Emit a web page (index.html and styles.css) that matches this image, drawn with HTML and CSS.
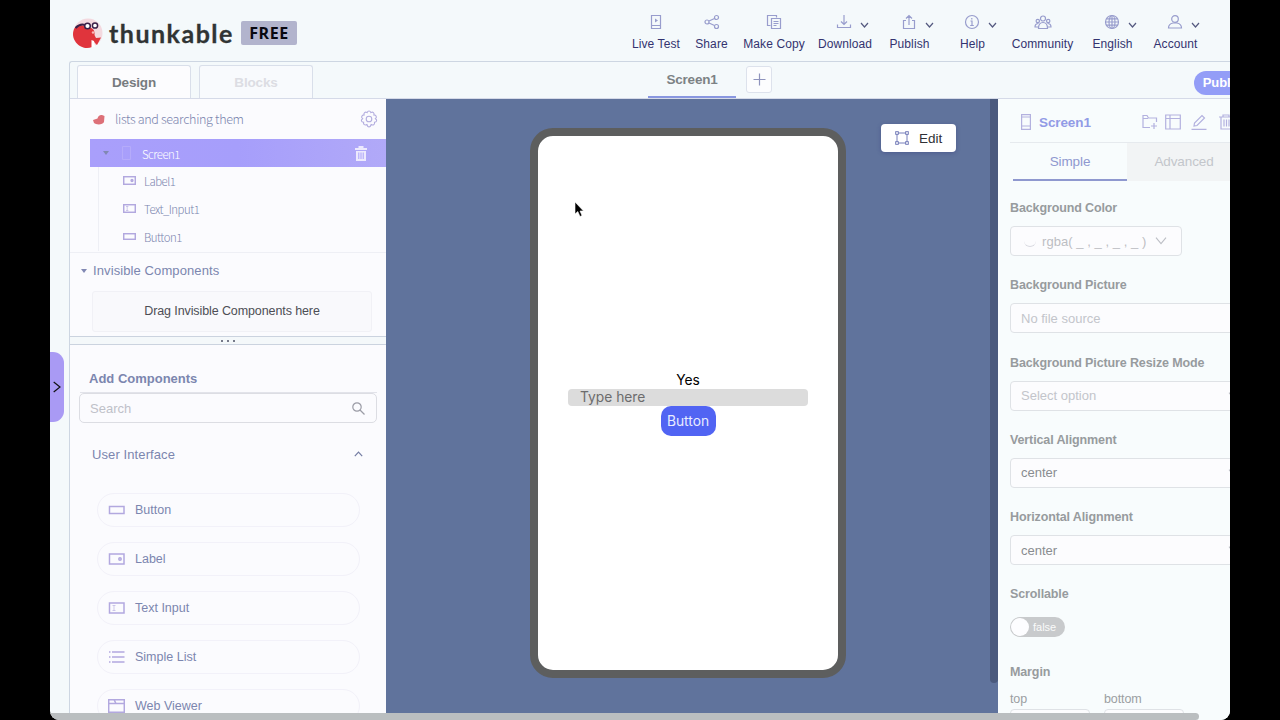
FILE: index.html
```html
<!DOCTYPE html>
<html lang="en">
<head>
  <meta charset="UTF-8" />
  <meta name="viewport" content="width=device-width, initial-scale=1.0"/>
  <title>Thunkable</title>
  <link rel="stylesheet" href="styles.css">
</head>
<body>

  <div class="window">
    <header class="header">
      <div class="brand">
        <svg class="brand-logo" width="30" height="31" viewBox="0 0 30 31">
          <circle cx="15" cy="15" r="14.500" fill="#f3d9df"/>
          <path d="M1 11C4 6 10 7 15 9C20 10 22 12 21.500 17L23 20L28 19.500L24 27L21 24L19 29C12 32 5 28 2 23C-1 18 0 14 1 11Z" fill="#e0343c"/>
          <path d="M18.500 22l2.500 1 1 5.500-3.500 1z" fill="#fff"/>
          <path d="M2.500 10C6 6.500 9 6 12 7" stroke="#3a2048" stroke-width="2" fill="none"/>
          <circle cx="14.500" cy="8" r="2.800" fill="#fff" stroke="#3a2048" stroke-width="1.500"/>
          <circle cx="22" cy="7.500" r="2.600" fill="#fff" stroke="#3a2048" stroke-width="1.500"/>
          <circle cx="20" cy="14.500" r="1.200" fill="#f8b8b8"/>
        </svg>
        <span class="brand-name">thunkable</span>
        <span class="plan">FREE</span>
      </div>
      <nav class="nav">
        <div class="nav-item">
          <div class="nav-icon"><svg width="16" height="16" viewBox="0 0 16 16"><path d="M3.500 1.500h9v13h-9zM3.500 11.500h9"/><path d="M7 4.500v4l3-2z" fill="#989dcd" stroke="none"/></svg></div>
          <span>Live Test</span>
        </div>
        <div class="nav-item">
          <div class="nav-icon"><svg width="16" height="16" viewBox="0 0 16 16"><circle cx="3" cy="8" r="2"/><circle cx="12.500" cy="3.500" r="2"/><circle cx="12.500" cy="12.500" r="2"/><path d="M5 7l5.500-2.500M5 9l5.500 2.500"/></svg></div>
          <span>Share</span>
        </div>
        <div class="nav-item">
          <div class="nav-icon"><svg width="16" height="16" viewBox="0 0 16 16"><path d="M4.500 11.500h-3v-10h9v2M5.500 4.500h9v10h-9zM7.500 7.500h5M7.500 9.500h5M7.500 11.500h3"/></svg></div>
          <span>Make Copy</span>
        </div>
        <div class="nav-item">
          <div class="nav-icon"><svg width="16" height="16" viewBox="0 0 16 16"><path d="M8 1v9.500M5 7.500l3 3 3-3M1.500 10.500v3h13v-3"/></svg><svg class="chev" width="9" height="6" viewBox="0 0 9 6"><path d="M1 1l3.500 4L8 1"/></svg></div>
          <span>Download</span>
        </div>
        <div class="nav-item">
          <div class="nav-icon"><svg width="16" height="16" viewBox="0 0 16 16"><path d="M8 11V2M5 4.500l3-3 3 3M5 6.500H2.500v8h11v-8H11"/></svg><svg class="chev" width="9" height="6" viewBox="0 0 9 6"><path d="M1 1l3.500 4L8 1"/></svg></div>
          <span>Publish</span>
        </div>
        <div class="nav-item">
          <div class="nav-icon"><svg width="16" height="16" viewBox="0 0 16 16"><circle cx="8" cy="8" r="6.500"/><path d="M6.500 7H8v4.500M6.200 11.500h3.600M7.800 4v1.500"/></svg><svg class="chev" width="9" height="6" viewBox="0 0 9 6"><path d="M1 1l3.500 4L8 1"/></svg></div>
          <span>Help</span>
        </div>
        <div class="nav-item">
          <div class="nav-icon"><svg width="18" height="16" viewBox="0 0 18 16"><circle cx="9" cy="4.500" r="2.500"/><circle cx="3.800" cy="7" r="1.700"/><circle cx="14.200" cy="7" r="1.700"/><path d="M4.500 14.500c0-4 1.500-6 4.500-6s4.500 2 4.500 6zM4 13H1c0-2 1-3.500 3.500-3.500M14 13h3c0-2-1-3.500-3.500-3.500"/></svg></div>
          <span>Community</span>
        </div>
        <div class="nav-item">
          <div class="nav-icon"><svg width="16" height="16" viewBox="0 0 16 16"><circle cx="8" cy="8" r="6.500"/><ellipse cx="8" cy="8" rx="3" ry="6.500"/><path d="M8 1.500v13M1.500 8h13M2.500 4.800h11M2.500 11.200h11"/></svg><svg class="chev" width="9" height="6" viewBox="0 0 9 6"><path d="M1 1l3.500 4L8 1"/></svg></div>
          <span>English</span>
        </div>
        <div class="nav-item">
          <div class="nav-icon"><svg width="16" height="16" viewBox="0 0 16 16"><circle cx="8" cy="5" r="3.300"/><path d="M1.500 14c0-3 2-4.500 4.500-5h4c2.500.5 4.500 2 4.500 5z"/></svg><svg class="chev" width="9" height="6" viewBox="0 0 9 6"><path d="M1 1l3.500 4L8 1"/></svg></div>
          <span>Account</span>
        </div>
      </nav>
    </header>

    <div class="editor">
      <div class="tab-bar">
        <div class="mode-tab active">Design</div>
        <div class="mode-tab">Blocks</div>
        <div class="screen-tab">Screen1</div>
        <div class="add-screen"><svg width="13" height="13" viewBox="0 0 13 13"><path d="M6.500.5v12M.5 6.500h12"/></svg></div>
        <div class="publish-btn">Publish</div>
      </div>

      <div class="panes">
        <aside class="left-pane">
          <div class="project">
            <svg width="12" height="11" viewBox="0 0 12 11"><path d="M0 6l4.500-1.500C5 2 7 .5 9 1L11.500 2 11 8c-1 3-8 3-10 1z" fill="#dd7078"/></svg>
            <span>lists and searching them</span>
            <svg class="gear" width="18" height="18" viewBox="0 0 18 18"><path d="M9 1q1.300 0 1.900 1.600 1.500-.9 2.500 0t.5 2.300q1.700 0 2.300 1.300t-.8 2.500q1.600 1 1.200 2.200t-2.100 1.400q.3 1.700-.8 2.400t-2.500-.2Q10.400 17 9 17t-2.100-2.500q-1.500.9-2.600.1T3.600 12.300Q1.800 12 1.400 10.900T2.600 8.700Q1.200 7.400 1.800 6.200T4.100 4.900Q3.600 3.500 4.600 2.600t2.500 0Q7.700 1 9 1z"/><circle cx="9" cy="9" r="2.800"/></svg>
          </div>
          <div class="tree">
            <div class="tree-root">
              <i class="caret"></i>
              <svg class="root-phone" width="9" height="14" viewBox="0 0 9 14"><path d="M.5.500h8v13h-8z"/></svg>
              <span>Screen1</span>
              <svg class="root-trash" width="12" height="15" viewBox="0 0 12 15"><path d="M0 2h3.500V0h5v2H12v2H0zM1 5h10v10H1z" fill="#ece9fd"/><path d="M3.800 6.500v6.500M6 6.500v6.500M8.200 6.500v6.500" stroke="#aaa1fa"/></svg>
            </div>
            <div class="tree-children">
              <div class="tree-item"><svg width="13" height="9" viewBox="0 0 13 9"><rect x=".7" y=".7" width="11.600" height="7.600"/><circle cx="9" cy="4.500" r=".9"/></svg>Label1</div>
              <div class="tree-item"><svg width="13" height="9" viewBox="0 0 13 9"><rect x=".7" y=".7" width="11.600" height="7.600"/><path class="thin" d="M3 2.500h2.400M4.200 2.500v4M3 6.500h2.400"/></svg>Text_Input1</div>
              <div class="tree-item"><svg width="13" height="7" viewBox="0 0 13 7"><rect x=".7" y=".7" width="11.600" height="5.600"/></svg>Button1</div>
            </div>
          </div>
          <div class="invisible">
            <div class="invisible-title"><i class="caret"></i>Invisible Components</div>
            <div class="drop-zone">Drag Invisible Components here</div>
          </div>
          <div class="splitter"><i></i><i></i><i></i></div>
          <div class="add-title">Add Components</div>
          <div class="search">Search <svg width="13" height="13" viewBox="0 0 13 13"><circle cx="5" cy="5" r="4.200"/><path d="M8 8l4.500 4.500"/></svg></div>
          <div class="group-title">User Interface <svg width="9" height="6" viewBox="0 0 9 6"><path d="M.8 5.200L4.500 1.200l3.700 4"/></svg></div>
          <div class="components">
            <div class="component"><svg width="17" height="12" viewBox="0 0 17 12"><rect x="1.500" y="2.500" width="14.500" height="7"/></svg>Button</div>
            <div class="component"><svg width="17" height="12" viewBox="0 0 17 12"><rect x="1.500" y="1" width="14.500" height="10"/><circle cx="12" cy="6" r="1.200"/></svg>Label</div>
            <div class="component"><svg width="17" height="12" viewBox="0 0 17 12"><rect x="1.500" y="1" width="14.500" height="10"/><path class="thin" d="M4.500 3.500h3M6 3.500v5M4.500 8.500h3"/></svg>Text Input</div>
            <div class="component"><svg width="17" height="12" viewBox="0 0 17 12"><path d="M1 1h1.500M1 6h1.500M1 11h1.500M4 1h12.500M4 6h12.500M4 11h12.500"/></svg>Simple List</div>
            <div class="component"><svg width="17" height="14" viewBox="0 0 17 14"><path d="M.7.700h15.600v12.600H.7zM.7 4.500h15.600M6 .7l2 3.800"/></svg>Web Viewer</div>
          </div>
        </aside>

        <main class="canvas">
          <div class="phone">
            <div class="phone-label">Yes</div>
            <div class="phone-input">Type here</div>
            <div class="phone-button">Button</div>
          </div>
          <div class="edit-btn">
            <svg width="14" height="14" viewBox="0 0 14 14"><path d="M2 2h10v10H2z"/><g fill="#fff"><rect x=".7" y=".7" width="2.600" height="2.600"/><rect x="10.700" y=".7" width="2.600" height="2.600"/><rect x=".7" y="10.700" width="2.600" height="2.600"/><rect x="10.700" y="10.700" width="2.600" height="2.600"/></g></svg>
            Edit
          </div>
          <div class="canvas-scroll"></div>
          <svg class="cursor" width="12" height="17" viewBox="0 0 12 17"><path d="M1 1v12l2.800-2.500L6 15.500l2-1-2-4.500h3.500z" fill="#000" stroke="#fff" stroke-width=".6"/></svg>
        </main>

        <aside class="right-pane">
          <div class="prop-head">
            <svg width="10" height="16" viewBox="0 0 10 16"><path d="M.6.600h8.800v14.800H.6zM.6 3h8.800M.6 12h8.800"/></svg>
            <span>Screen1</span>
            <div class="prop-actions">
              <svg width="16" height="16" viewBox="0 0 16 16"><path d="M8 13.500H1v-12h4l1.500 2.500h8V8M1 4.500h5M9 12h6M12 9v6"/></svg>
              <svg width="16" height="16" viewBox="0 0 16 16"><path d="M.7 1h14.600v14H.7zM.7 4.500h14.600M5 1v14"/></svg>
              <svg width="16" height="16" viewBox="0 0 16 16"><path d="M.5 15.300h15M3 12l.5-3L11 1.500 13.500 4 6 11.500z"/></svg>
              <svg width="14" height="16" viewBox="0 0 14 16"><path d="M0 3h14M4 3V1h6v2M2 3v12h10V3M5 5.500v7M7.500 5.500v7M10 5.500v7"/></svg>
            </div>
          </div>
          <div class="prop-tabs">
            <div class="prop-tab active">Simple</div>
            <div class="prop-tab">Advanced</div>
          </div>
          <div class="props">
            <div class="prop">
              <label>Background Color</label>
              <div class="field color-field"><i class="swatch"></i><span>rgba( _ , _ , _ , _ )</span><svg width="12" height="8" viewBox="0 0 12 8"><path d="M1 .7l5 6 5-6"/></svg></div>
            </div>
            <div class="prop"><label>Background Picture</label><div class="field">No file source</div></div>
            <div class="prop"><label>Background Picture Resize Mode</label><div class="field select">Select option<svg width="12" height="8" viewBox="0 0 12 8"><path d="M1 .7l5 6 5-6"/></svg></div></div>
            <div class="prop"><label>Vertical Alignment</label><div class="field select filled">center<svg width="12" height="8" viewBox="0 0 12 8"><path d="M1 .7l5 6 5-6"/></svg></div></div>
            <div class="prop"><label>Horizontal Alignment</label><div class="field select filled">center<svg width="12" height="8" viewBox="0 0 12 8"><path d="M1 .7l5 6 5-6"/></svg></div></div>
            <div class="prop"><label>Scrollable</label><div class="toggle"><i></i>false</div></div>
            <div class="prop">
              <label>Margin</label>
              <div class="margins">
                <div>top<div class="margin-input"></div></div>
                <div>bottom<div class="margin-input"></div></div>
              </div>
            </div>
          </div>
        </aside>
      </div>
    </div>

    <div class="drawer"><svg width="8" height="12" viewBox="0 0 8 12"><path d="M.7 1L7 6 .7 11"/></svg></div>
    <div class="h-scroll"></div>
  </div>

</body>
</html>
```
FILE: styles.css
```css
* {
  box-sizing: border-box;
}

body {
  margin: 0;
  height: 720px;
  overflow: hidden;
  background: #000;
  font-family: "Liberation Sans", Arial, sans-serif;
  font-size: 12px;
}

svg {
  fill: none;
  flex-shrink: 0;
}

.window {
  position: relative;
  width: 1180px;
  height: 720px;
  margin: 0 auto;
  display: flex;
  flex-direction: column;
  overflow: hidden;
  background: #f4f9fb;
  border-radius: 0 0 9px 9px;
}

/* header */
.header {
  height: 61px;
  flex-shrink: 0;
  display: flex;
  justify-content: space-between;
  padding: 0 25px 0 23px;
}

.brand {
  display: flex;
  align-items: center;
  height: 66px;
}

.brand-name {
  width: 131px;
  margin-left: 6px;
  padding-bottom: 1px;
  font-family: Lato, sans-serif;
  font-size: 25px;
  font-weight: 700;
  letter-spacing: 1.5px;
  line-height: 30px;
  color: #303434;
  -webkit-text-stroke: 0.3px #303434;
}

.plan {
  width: 56px;
  height: 24px;
  margin-left: 1px;
  border-radius: 2px;
  background: #b2b4cd;
  color: #080810;
  font-family: "Open Sans", sans-serif;
  font-size: 16px;
  font-weight: 700;
  letter-spacing: 0.6px;
  line-height: 24px;
  text-align: center;
}

.nav {
  display: grid;
  grid-template-columns: 58px 53px 72px 70px 59px 67px 73px 67px 59px;
}

.nav-item {
  display: flex;
  flex-direction: column;
  align-items: center;
  padding-top: 14px;
  font-size: 12px;
  letter-spacing: 0.1px;
  line-height: 14px;
  white-space: nowrap;
  color: #33336f;
}

.nav-icon {
  display: flex;
  height: 16px;
  margin-bottom: 7px;
}

.nav-icon svg {
  stroke: #989dcd;
  stroke-width: 1.2;
}

.nav-icon .chev {
  margin: 8px -15px 0 8px;
  stroke: #555a80;
}

/* editor */
.editor {
  flex: 1;
  min-height: 0;
  display: flex;
  flex-direction: column;
  margin-left: 19px;
  border: 1px solid #cdd6e2;
  border-width: 1px 0 0 1px;
  border-radius: 3px 0 0 0;
}

.tab-bar {
  height: 37px;
  flex-shrink: 0;
  display: flex;
  padding-left: 7px;
  border-bottom: 1px solid #d5dae8;
  font-weight: 700;
}

.mode-tab {
  width: 114px;
  height: 33px;
  margin: 3px 8px 0 0;
  border: 1px solid #d9dfea;
  border-bottom: 0;
  border-radius: 3px 3px 0 0;
  font-size: 13.5px;
  letter-spacing: -0.15px;
  line-height: 34px;
  text-align: center;
  color: #dcdde3;
  background: #f8fafd;
}

.mode-tab.active {
  color: #777b7f;
  background: #fcfcfe;
}

.screen-tab {
  width: 88px;
  margin-left: 327px;
  border-bottom: 2px solid #8997e0;
  font-size: 13.5px;
  letter-spacing: -0.2px;
  line-height: 35px;
  text-align: center;
  color: #7c8285;
}

.add-screen {
  display: flex;
  align-items: center;
  justify-content: center;
  width: 26px;
  height: 27px;
  margin: 4px 0 0 10px;
  border: 1px solid #dde2ec;
  border-radius: 3px;
  background: #fcfdfe;
}

.add-screen svg {
  stroke: #8f94bd;
  stroke-width: 1.2;
}

.publish-btn {
  height: 24px;
  flex-shrink: 0;
  margin: 9px -33px 0 auto;
  padding: 0 14px 0 9px;
  border-radius: 12px;
  background: #939df7;
  color: #fff;
  font-size: 13px;
  letter-spacing: -0.1px;
  line-height: 24px;
}

.panes {
  flex: 1;
  min-height: 0;
  display: flex;
}

/* left pane */
.left-pane {
  width: 316px;
  flex-shrink: 0;
  overflow: hidden;
  background: #fbfbfe;
  color: #7c86af;
}

.project {
  display: flex;
  align-items: center;
  height: 40px;
  padding: 0 8px 0 23px;
  font-family: "Noto Sans CJK SC", sans-serif;
  font-size: 12.6px;
  font-weight: 300;
  letter-spacing: -0.35px;
}

.project span {
  margin: -2px 0 0 10px;
}

.gear {
  margin-left: auto;
  stroke: #b3addf;
  stroke-width: 1.1;
}

.tree {
  height: 114px;
  border-bottom: 1px solid #eeeff5;
  font-family: "Noto Sans CJK SC", sans-serif;
  font-size: 11.4px;
  font-weight: 300;
  letter-spacing: -0.5px;
}

.tree-root {
  display: flex;
  align-items: center;
  height: 28px;
  margin-left: 20px;
  padding: 0 19px 0 13px;
  background: linear-gradient(90deg, #a99ffb, #a69efb 50%, #b1a9f8);
  color: #fff;
}

.caret {
  width: 0;
  height: 0;
  border: 3.5px solid transparent;
  border-top: 4px solid #8188b3;
  border-bottom: 0;
}

.root-phone {
  margin: 0 11px 0 13px;
  stroke: #b5abfa;
}

.tree-root span {
  padding-top: 2px;
}

.root-trash {
  margin-left: auto;
}

.tree-children {
  margin-left: 28px;
  border-left: 1px solid #eeeff5;
}

.tree-item {
  display: flex;
  align-items: center;
  gap: 8px;
  height: 28px;
  padding: 0 0 1px 24px;
}

.tree-item svg,
.component svg {
  stroke: #b2a8df;
  stroke-width: 1.5;
}

.tree-item .thin,
.component .thin {
  stroke-width: 0.6;
}

.invisible {
  height: 84px;
  border-bottom: 1px solid #cbd3df;
}

.invisible-title {
  display: flex;
  align-items: center;
  gap: 6px;
  height: 35px;
  padding-left: 11px;
  font-size: 13px;
  letter-spacing: 0.1px;
}

.drop-zone {
  width: 280px;
  height: 41px;
  margin: 3px 0 0 22px;
  border: 1px solid #f1f1f6;
  border-radius: 3px;
  background: #f9f9fc;
  color: #4d4e55;
  font-size: 12.5px;
  letter-spacing: -0.1px;
  line-height: 39px;
  text-align: center;
}

.splitter {
  display: flex;
  align-items: center;
  justify-content: center;
  gap: 4px;
  height: 8px;
  border-bottom: 1px solid #cbd3df;
  background: #f4f8fa;
}

.splitter i {
  width: 2px;
  height: 2px;
  border-radius: 50%;
  background: #4d5165;
}

.add-title {
  height: 48px;
  margin: 0 9px 0 10px;
  padding: 26px 0 0 9px;
  border-bottom: 1px solid #e2e3ea;
  font-size: 13px;
  font-weight: 700;
  line-height: 16px;
}

.search {
  display: flex;
  align-items: center;
  justify-content: space-between;
  height: 30px;
  margin: 0 9px;
  padding: 0 11px 0 10px;
  border: 1px solid #dcdde3;
  border-radius: 5px;
  font-size: 13px;
  color: #bfc1c9;
}

.search svg {
  stroke: #9b9ca6;
  stroke-width: 1.2;
}

.group-title {
  display: flex;
  align-items: center;
  justify-content: space-between;
  height: 62px;
  padding: 0 23px 0 22px;
  font-size: 13px;
  letter-spacing: 0.1px;
}

.group-title svg {
  stroke: #737ca3;
  stroke-width: 1.2;
}

.components {
  display: flex;
  flex-direction: column;
  gap: 15px;
  margin: 8px 26px 0 27px;
}

.component {
  display: flex;
  align-items: center;
  gap: 10px;
  height: 34px;
  flex-shrink: 0;
  padding-left: 10px;
  border: 1px solid #f2f1f9;
  border-radius: 17px;
  font-size: 12.5px;
}

/* canvas */
.canvas {
  position: relative;
  width: 612px;
  flex-shrink: 0;
  padding: 29px 0 0 144px;
  background: #60739c;
}

.phone {
  display: flex;
  flex-direction: column;
  align-items: center;
  justify-content: center;
  width: 316px;
  height: 550px;
  padding-top: 2px;
  border: 8px solid #5d5e5e;
  border-radius: 23px;
  background: #fff;
  font-family: Inter, sans-serif;
  font-size: 13.8px;
}

.phone-label {
  height: 17px;
  line-height: 17px;
  color: #000;
}

.phone-input {
  width: 240px;
  height: 17px;
  padding-left: 12px;
  border-radius: 4px;
  background: #dcdcdc;
  color: #6c6c6c;
  line-height: 17px;
}

.phone-button {
  width: 55px;
  height: 30px;
  border-radius: 10px;
  background: #5164f3;
  color: #e9ecff;
  line-height: 31px;
  text-align: center;
}

.edit-btn {
  position: absolute;
  top: 25px;
  right: 42px;
  display: flex;
  align-items: center;
  gap: 10px;
  width: 75px;
  height: 28px;
  padding-left: 14px;
  border-radius: 4px;
  background: #fff;
  box-shadow: 0 1px 4px rgba(50, 55, 120, 0.4);
  color: #303036;
  font-size: 13.5px;
}

.edit-btn svg {
  stroke: #6870b3;
  stroke-width: 0.9;
}

.canvas-scroll {
  position: absolute;
  top: 0;
  right: 0;
  width: 8px;
  height: 584px;
  border-radius: 0 0 4px 4px;
  background: #4b5a7d;
}

.cursor {
  position: absolute;
  left: 188px;
  top: 102px;
}

/* right pane */
.right-pane {
  width: 232px;
  flex-shrink: 0;
  overflow: hidden;
  padding-left: 12px;
  background: #f8fcfd;
}

.prop-head {
  display: flex;
  align-items: center;
  height: 44px;
  padding: 3px 0 0 11px;
  border-bottom: 1px solid #e6eaee;
}

.prop-head span {
  width: 103px;
  margin-left: 8px;
  flex-shrink: 0;
  color: #929be6;
  font-size: 13.5px;
  font-weight: 700;
  letter-spacing: -0.1px;
}

.prop-head svg {
  stroke: #b3b1df;
  stroke-width: 1.2;
}

.prop-actions {
  display: flex;
  flex-shrink: 0;
  gap: 7px;
}

.prop-actions svg:nth-child(3) {
  margin-left: 3px;
}

.prop-actions svg:nth-child(4) {
  margin-left: 5px;
}

.prop-tabs {
  display: flex;
  height: 38px;
  margin-left: 3px;
}

.prop-tab {
  width: 114px;
  flex-shrink: 0;
  background: #f2f4f5;
  color: #c3c6cb;
  font-size: 13.5px;
  letter-spacing: -0.1px;
  line-height: 37px;
  text-align: center;
}

.prop-tab.active {
  border-bottom: 2px solid #8f98cf;
  background: none;
  color: #8f98d0;
}

.props {
  padding-top: 19px;
}

.prop {
  height: 77.25px;
}

.prop label {
  display: block;
  height: 26px;
  font-size: 12.5px;
  font-weight: 700;
  letter-spacing: -0.12px;
  line-height: 17px;
  white-space: nowrap;
  color: #979b9e;
}

.field {
  display: flex;
  align-items: center;
  justify-content: space-between;
  width: 231px;
  height: 30px;
  padding: 0 0 0 10px;
  border: 1px solid #dfe2e6;
  border-radius: 4px;
  background: #fcfcfe;
  color: #c3c5cb;
  font-size: 13px;
}

.field svg {
  stroke: #bcbec5;
  stroke-width: 1.1;
}

.field.filled {
  color: #898c90;
}

.color-field {
  justify-content: flex-start;
  width: 172px;
  padding-left: 13px;
  color: #bcbec3;
}

.color-field span {
  width: 107px;
  margin: 0 6px 0 6px;
  letter-spacing: 0.05px;
  white-space: nowrap;
}

.swatch {
  width: 12px;
  height: 12px;
  border-bottom: 1px solid #d8d9e0;
  border-radius: 50%;
}

.toggle {
  display: flex;
  align-items: center;
  gap: 4px;
  width: 55px;
  height: 20px;
  margin-top: 5px;
  padding-left: 1px;
  border-radius: 10px;
  background: #c8cacc;
  color: #fafafa;
  font-size: 11px;
}

.toggle i {
  width: 18px;
  height: 18px;
  border-radius: 50%;
  background: #fdfdff;
}

.margins {
  display: flex;
  gap: 14px;
  width: 174px;
  margin-top: 1px;
  color: #9b9fa2;
  font-size: 12.5px;
  letter-spacing: -0.1px;
  line-height: 17px;
}

.margin-input {
  width: 80px;
  height: 30px;
  margin-top: 1px;
  border: 1px solid #dfe2e6;
  border-radius: 4px;
  background: #fcfcfe;
}

/* drawer handle on the window edge */
.drawer {
  position: absolute;
  left: 0;
  top: 352px;
  display: flex;
  align-items: center;
  width: 14px;
  height: 70px;
  padding-left: 3px;
  border-radius: 0 11px 11px 0;
  background: #a99af4;
}

.drawer svg {
  stroke: #111;
  stroke-width: 1.2;
}

.h-scroll {
  position: absolute;
  left: 0;
  bottom: 0;
  width: 1149px;
  height: 7px;
  border-radius: 0 4px 4px 0;
  background: #babec0;
}
```
